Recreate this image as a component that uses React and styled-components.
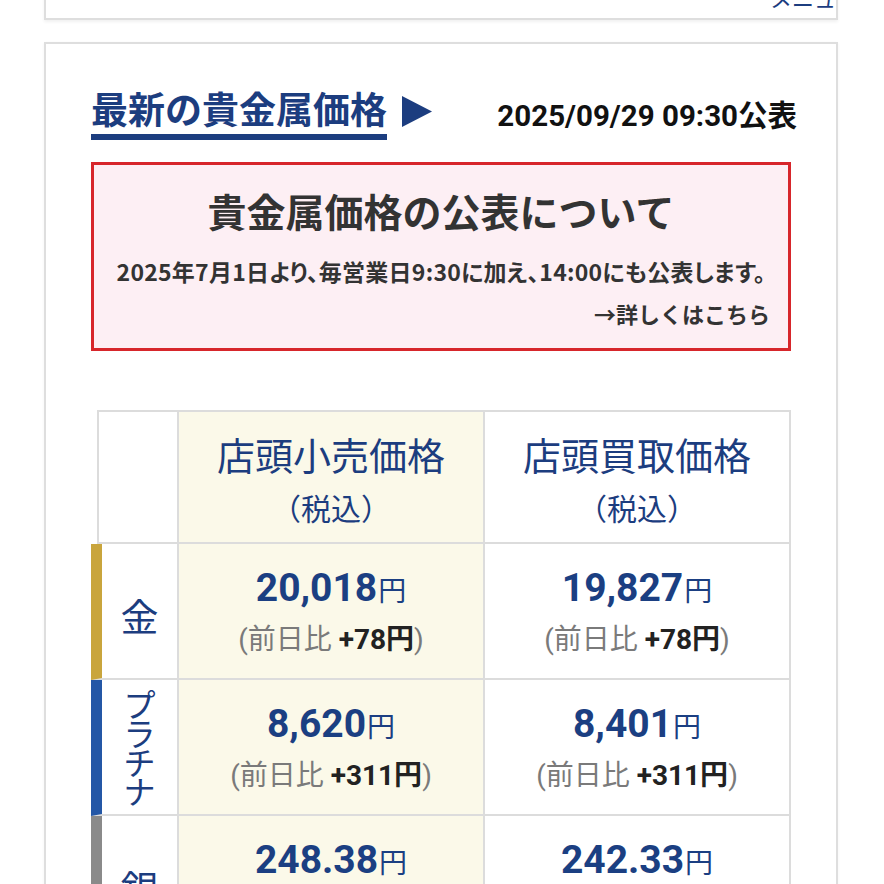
import React from "react";
import styled, { createGlobalStyle } from "styled-components";

const NAVY = "#1c3d7f";
const LINE = "#dcdcdc";

const GlobalStyle = createGlobalStyle`
  body {
    margin: 0;
    background: #fff;
    font-family: "Noto Sans CJK JP", "Noto Sans", sans-serif;
  }
`;

const Page = styled.div`
  width: 884px;
  height: 884px;
  overflow: hidden;
`;

const PrevCard = styled.div`
  box-sizing: border-box;
  height: 60px;
  margin: -40px 46px 0 44px;
  padding: 0 2px 10px 0;
  border: 2px solid #dedede;
  border-top: none;
  box-shadow: 0 2px 3px rgba(0, 0, 0, 0.06);
  display: flex;
  justify-content: flex-end;
  align-items: flex-end;
`;

const MenuLabel = styled.span`
  margin-right: -24px;
  font-size: 22px;
  line-height: 1;
  color: ${NAVY};
  white-space: nowrap;
`;

const Card = styled.section`
  margin: 22px 46px 0 44px;
  padding: 42px 45px 40px;
  border: 2px solid #dedede;
  box-shadow: 0 1px 3px rgba(0, 0, 0, 0.05);
`;

const Header = styled.div`
  display: flex;
  align-items: center;
`;

const Title = styled.h2`
  margin: 0;
  padding-bottom: 4px;
  font-size: 37px;
  line-height: 44px;
  font-weight: 700;
  color: ${NAVY};
  border-bottom: 6px solid ${NAVY};
`;

const Arrow = styled.svg`
  margin: 0 0 4px 15px;
  fill: ${NAVY};
`;

const Published = styled.div`
  margin-left: auto;
  margin-right: -6px;
  font-family: Roboto, "Noto Sans CJK JP", sans-serif;
  font-size: 29.5px;
  font-weight: 700;
  color: #111;
  white-space: nowrap;
`;

const Notice = styled.div`
  margin-top: 22px;
  padding: 21px 18px 18px;
  border: 3px solid #d7262b;
  background: #fdeff4;
  color: #333;
  text-align: center;
`;

const NoticeTitle = styled.h3`
  margin: 0;
  font-size: 39px;
  line-height: 49px;
  font-weight: 700;
`;

const NoticeText = styled.p`
  margin: 20px 0 0;
  font-size: 23px;
  line-height: 33px;
  font-weight: 700;
  letter-spacing: 0.25px;
  white-space: nowrap;
  font-feature-settings: "palt";
`;

const NoticeLink = styled.p`
  margin: 9px 0 0;
  font-size: 22px;
  line-height: 33px;
  font-weight: 700;
  text-align: right;
`;

const PriceTable = styled.div`
  margin-top: 59px;
  display: grid;
  grid-template-columns: 88px 1fr 1fr;
`;

const Corner = styled.div`
  margin-left: 6px;
  height: 134px;
  box-sizing: border-box;
  border: 2px solid ${LINE};
`;

const HeadCell = styled.div`
  height: 134px;
  box-sizing: border-box;
  border: 2px solid ${LINE};
  border-left: none;
  background: ${(p) => (p.$cream ? "#fbf9e9" : "#fff")};
  color: ${NAVY};
  display: flex;
  flex-direction: column;
  align-items: center;
  justify-content: center;
  gap: 8px;
`;

const HeadMain = styled.div`
  font-size: 38px;
  line-height: 53px;
`;

const HeadSub = styled.div`
  font-size: 30px;
  line-height: 39px;
`;

const LabelCell = styled.div`
  height: 136px;
  box-sizing: border-box;
  border-left: 11px solid ${(p) => p.$bar};
  border-right: 2px solid ${LINE};
  border-bottom: 2px solid ${LINE};
  display: flex;
  align-items: center;
  justify-content: center;
  color: ${NAVY};
`;

const Metal = styled.div`
  font-size: 38px;
  line-height: 1;
  padding-top: 8px;
`;

const VerticalMetal = styled.div`
  width: 1em;
  font-size: 32px;
  line-height: 29px;
  text-align: center;
  word-break: break-all;
`;

const ValueCell = styled.div`
  height: 136px;
  box-sizing: border-box;
  border-right: 2px solid ${LINE};
  border-bottom: 2px solid ${LINE};
  background: ${(p) => (p.$cream ? "#fbf9e9" : "#fff")};
  display: flex;
  flex-direction: column;
  align-items: center;
  justify-content: center;
  gap: 6px;
`;

const Price = styled.div`
  font-family: Roboto, "Noto Sans CJK JP", sans-serif;
  font-size: 39px;
  line-height: 49px;
  font-weight: 700;
  color: #1b3f82;
`;

const Yen = styled.span`
  font-family: "Noto Sans CJK JP", sans-serif;
  font-size: 28px;
  font-weight: 400;
  margin-left: 1px;
`;

const Diff = styled.div`
  font-family: Roboto, "Noto Sans CJK JP", sans-serif;
  font-size: 28px;
  line-height: 39px;
  color: #7a7a7a;

  strong {
    font-weight: 700;
    color: #222;
  }
`;

const rows = [
  { label: "金", bar: "#c9a53c", retail: "20,018", rDiff: "+78", buy: "19,827", bDiff: "+78" },
  { label: "プラチナ", bar: "#2457a6", retail: "8,620", rDiff: "+311", buy: "8,401", bDiff: "+311", vertical: true },
  { label: "銀", bar: "#8a8a8a", retail: "248.38", rDiff: "+1.21", buy: "242.33", bDiff: "+1.21" },
];

function PriceBlock({ value, diff, cream }) {
  return (
    <ValueCell $cream={cream}>
      <Price>
        {value}
        <Yen>円</Yen>
      </Price>
      <Diff>
        (前日比 <strong>{diff}円</strong>)
      </Diff>
    </ValueCell>
  );
}

export default function App() {
  return (
    <Page>
      <GlobalStyle />
      <PrevCard>
        <MenuLabel>メニュー</MenuLabel>
      </PrevCard>
      <Card>
        <Header>
          <Title>最新の貴金属価格</Title>
          <Arrow width="30" height="31" viewBox="0 0 30 31">
            <polygon points="0,0 30,15.5 0,31" />
          </Arrow>
          <Published>2025/09/29 09:30公表</Published>
        </Header>

        <Notice>
          <NoticeTitle>貴金属価格の公表について</NoticeTitle>
          <NoticeText>
            2025年7月1日より、毎営業日9:30に加え、14:00にも公表します。
          </NoticeText>
          <NoticeLink>→詳しくはこちら</NoticeLink>
        </Notice>

        <PriceTable>
          <Corner />
          <HeadCell $cream>
            <HeadMain>店頭小売価格</HeadMain>
            <HeadSub>（税込）</HeadSub>
          </HeadCell>
          <HeadCell>
            <HeadMain>店頭買取価格</HeadMain>
            <HeadSub>（税込）</HeadSub>
          </HeadCell>
          {rows.map((r) => (
            <React.Fragment key={r.label}>
              <LabelCell $bar={r.bar}>
                {r.vertical ? (
                  <VerticalMetal>{r.label}</VerticalMetal>
                ) : (
                  <Metal>{r.label}</Metal>
                )}
              </LabelCell>
              <PriceBlock value={r.retail} diff={r.rDiff} cream />
              <PriceBlock value={r.buy} diff={r.bDiff} />
            </React.Fragment>
          ))}
        </PriceTable>
      </Card>
    </Page>
  );
}
